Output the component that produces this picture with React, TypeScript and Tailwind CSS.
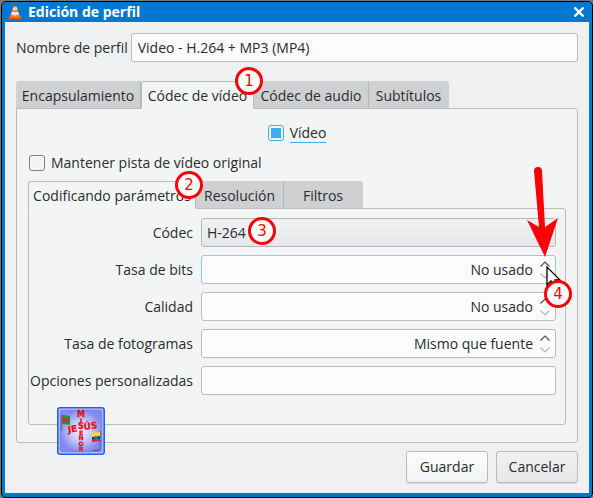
import type { ReactNode } from "react";
import { clsx } from "clsx";

function Marker({ n, className }: { n: number; className: string }) {
  return (
    <span
      className={clsx(
        "pointer-events-none absolute z-20 flex size-7 items-center justify-center rounded-full border-3 border-[#fb0007] bg-white font-['DejaVu_Sans',sans-serif] text-[15px] leading-none text-[#fb0007]",
        className,
      )}
    >
      {n}
    </span>
  );
}

function Tab({
  children,
  selected,
  last,
  className,
}: {
  children: ReactNode;
  selected?: boolean;
  last?: boolean;
  className: string;
}) {
  return (
    <button
      type="button"
      role="tab"
      aria-selected={!!selected}
      className={clsx(
        "relative h-7 whitespace-nowrap border pt-px text-center",
        selected
          ? "z-10 rounded-t-[3px] border-[#babcbc] border-b-[#f3f5f4] bg-[#f3f5f4]"
          : "border-l-0 border-t-[#cfd0d1] border-r-[#b4b6b7] border-b-[#babcbc] bg-[#cfd0d1]",
        last && "rounded-tr-[3px] border-r-[#cfd0d1]",
        className,
      )}
    >
      {children}
    </button>
  );
}

function Spin({ id, value, active }: { id: string; value: string; active?: boolean }) {
  return (
    <div
      className={clsx(
        "flex h-[29px] rounded-[3px] border bg-[#fcfcfc] pr-1",
        active ? "border-[#8ecbea]" : "border-[#babcbc]",
      )}
    >
      <input
        id={id}
        defaultValue={value}
        className="min-w-0 flex-1 bg-transparent pr-1.5 text-right outline-none"
      />
      <div className="flex w-3 flex-col justify-center gap-1">
        <button type="button" aria-label="Aumentar" className="h-2">
          <svg viewBox="0 0 12 8" className="block h-2 w-3" fill="none" stroke="#4d4d4d" strokeWidth="1.2">
            <path d="M1.5 6.5 6 2l4.5 4.5" />
          </svg>
        </button>
        <button type="button" aria-label="Disminuir" className="h-2">
          <svg viewBox="0 0 12 8" className="block h-2 w-3" fill="none" stroke="#b5b7b7" strokeWidth="1.2">
            <path d="M1.5 1.5 6 6l4.5-4.5" />
          </svg>
        </button>
      </div>
    </div>
  );
}

function Cone() {
  return (
    <svg viewBox="0 0 14 16" className="h-4 w-3.5">
      <path d="M2 11h10l2 4.5H0z" fill="#e66b0b" />
      <path d="M0 14.5h14v1H0z" fill="#b84a00" />
      <path d="M6 .5h2l3.6 12q-4.6 2-9.2 0z" fill="#f58220" />
      <path d="M5.2 3.2h3.6l.8 2.6q-2.6 1-5.2 0z" fill="#d9d9d9" />
      <path d="M3.7 8h6.6l.8 2.6q-4.1 1.6-8.2 0z" fill="#e9e9e9" />
      <path d="M6 .5h2l.4 1.6H5.6z" fill="#6b4b37" />
    </svg>
  );
}

function Logo() {
  return (
    <svg viewBox="0 0 48 48" className="absolute left-10 top-[298px] z-10 size-12" fontFamily="DejaVu Sans, sans-serif" fontWeight="bold">
      <defs>
        <radialGradient id="glow">
          <stop offset="0" stopColor="#f4f0ff" />
          <stop offset=".5" stopColor="#ccc7fb" />
          <stop offset="1" stopColor="#8589ed" />
        </radialGradient>
      </defs>
      <rect x=".8" y=".8" width="46.4" height="46.4" rx="2.5" fill="#b6d0ff" stroke="#2d5be3" strokeWidth="1.6" />
      <rect x="3" y="3" width="42" height="42" rx="2" fill="url(#glow)" stroke="#6d80e8" strokeWidth=".7" />
      <path d="M4.7 8v16" stroke="#686884" />
      <path d="m5 8 8 1v9l-8-1z" fill="#269242" />
      <path d="m5 11 8 1v3l-8-1z" fill="#d62b35" />
      <path d="M43.2 24v18" stroke="#686884" />
      <path d="m35 26 8-1v4l-8 1z" fill="#ffe500" />
      <path d="m35 30 8-1v3l-8 1z" fill="#173fa6" />
      <path d="m35 33 8-1v2l-8 1z" fill="#df2532" />
      <circle cx="39" cy="30" r="1.6" fill="#977d32" />
      <path d="m36 44 3-1 1 .5 3-1.5" stroke="#454565" fill="none" />
      <g fill="#da1520" stroke="#da1520" strokeWidth=".3" textAnchor="middle" fontSize="6">
        <text x="24" y="10" fontSize="8">M</text>
        <text x="24" y="15.5">I</text>
        <text x="24" y="22" fontSize="8">S</text>
        <text x="24" y="27.5">E</text>
        <text x="24" y="33">Ñ</text>
        <text x="24" y="38.5">O</text>
        <text x="24" y="44">R</text>
        <text x="15.5" y="25" fontSize="9" transform="rotate(-8 15.5 22)">JE</text>
        <text x="33.5" y="22" fontSize="9" transform="rotate(-8 33.5 19)">ÚS</text>
      </g>
    </svg>
  );
}

function Pointer() {
  return (
    <svg viewBox="0 0 44 136" className="pointer-events-none absolute -right-2 -top-[88px] z-10 h-[136px] w-11">
      <path d="M27 100v18l4-4 3 7 4-1-3-7h5z" fill="#fff" stroke="#000" strokeWidth="1.3" />
      <path d="M14 4q0-4 4-4t4 4l3 56 13-9-13 39L7 53l12 7z" fill="#fb0007" />
    </svg>
  );
}

const label = "text-right whitespace-nowrap";
const action =
  "h-8 w-[82px] rounded-[3px] border border-[#babcbc] bg-linear-to-b shadow-[0_1px_0_#d9dadb]";

export default function App() {
  return (
    <div className="bg-[#737577] pt-px pl-px font-['Open_Sans','Noto_Sans',sans-serif] text-sm leading-5 text-[#292c30]">
      <main className="rounded-[5px] border border-black bg-[#0078d0] px-[3px] pb-1">
        <header className="flex h-5 items-center pl-[3px] pr-0.5 text-white">
          <Cone />
          <h1 className="ml-1.5 flex-1 text-sm leading-5 font-bold">Edición de perfil</h1>
          <button type="button" aria-label="Cerrar" className="size-4">
            <svg viewBox="0 0 16 16" className="size-4" stroke="#fff" strokeWidth="2.4">
              <path d="m3.5 3.5 9 9m0-9-9 9" />
            </svg>
          </button>
        </header>

        <form className="bg-[#eff0f1] px-[11px] pt-[11px] pb-[10px]">
          <div className="flex items-center gap-[3px]">
            <label htmlFor="name" className="whitespace-nowrap">Nombre de perfil</label>
            <input
              id="name"
              defaultValue="Video - H.264 + MP3 (MP4)"
              className="h-[29px] min-w-0 flex-1 rounded-[3px] border border-[#babcbc] bg-[#fcfcfc] px-1.5 outline-none"
            />
          </div>

          <div role="tablist" className="mt-[19px] flex">
            <Tab className="w-[125px] rounded-tl-[3px]">Encapsulamiento</Tab>
            <Tab className="w-[113px]" selected>
              Códec de vídeo
              <Marker n={1} className="-right-[10px] -top-[15px]" />
            </Tab>
            <Tab className="w-[115px]">Códec de audio</Tab>
            <Tab className="w-20" last>Subtítulos</Tab>
          </div>

          <section className="relative -mt-px rounded-b-[3px] rounded-tr-[3px] border border-[#babcbc] bg-[#f3f5f4] px-[11px] pt-[14px] pb-[17px]">
            <div className="flex h-5 items-center justify-center gap-1.5">
              <input
                id="video"
                type="checkbox"
                defaultChecked
                className="size-4 appearance-none rounded-[3px] border border-[#3daee9] bg-[#3daee9] bg-clip-content p-[2px]"
              />
              <label htmlFor="video" className="h-5 border-b border-[#3daee9]">Vídeo</label>
            </div>
            <div className="mt-[10px] flex h-5 items-center gap-1.5 pl-px">
              <input
                id="keep"
                type="checkbox"
                className="size-4 appearance-none rounded-[3px] border border-[#7d7f80]"
              />
              <label htmlFor="keep">Mantener pista de vídeo original</label>
            </div>

            <div role="tablist" className="mt-2 flex">
              <Tab className="w-[168px]" selected>
                Codificando parámetros
                <Marker n={2} className="-right-[8px] -top-[11px]" />
              </Tab>
              <Tab className="w-[88px]">Resolución</Tab>
              <Tab className="w-[79px]" last>Filtros</Tab>
            </div>
            <div className="-mt-px grid grid-cols-[164px_1fr] items-center gap-x-2 gap-y-2 rounded-b-[3px] rounded-tr-[3px] border border-[#babcbc] pt-[9px] pr-[9px] pb-[29px]">
              <label htmlFor="codec" className={label}>Códec</label>
              <div className="relative">
                <select
                  id="codec"
                  className="block h-[29px] w-full appearance-none rounded-[3px] border border-[#b4b6b7] bg-linear-to-b from-[#f0f1f2] to-[#e6e7e8] px-[5px]"
                >
                  <option>H-264</option>
                </select>
                <Marker n={3} className="left-[47px] -top-px" />
              </div>
              <label htmlFor="bits" className={label}>Tasa de bits</label>
              <div className="relative">
                <Spin id="bits" value="No usado" active />
                <Pointer />
                <Marker n={4} className="-right-4 top-[25px]" />
              </div>
              <label htmlFor="quality" className={label}>Calidad</label>
              <Spin id="quality" value="No usado" />
              <label htmlFor="fps" className={label}>Tasa de fotogramas</label>
              <Spin id="fps" value="Mismo que fuente" />
              <label htmlFor="custom" className={label}>Opciones personalizadas</label>
              <input
                id="custom"
                className="h-[29px] w-full min-w-0 rounded-[3px] border border-[#babcbc] bg-[#fcfcfc] px-1.5 outline-none"
              />
            </div>
            <Logo />
          </section>

          <div className="mt-2 flex justify-end gap-2">
            <button type="button" className={clsx(action, "from-[#fcfcfc] to-[#f1f2f3]")}>Guardar</button>
            <button type="button" className={clsx(action, "from-[#f0f1f2] to-[#e7e8ea]")}>Cancelar</button>
          </div>
        </form>
      </main>
    </div>
  );
}
